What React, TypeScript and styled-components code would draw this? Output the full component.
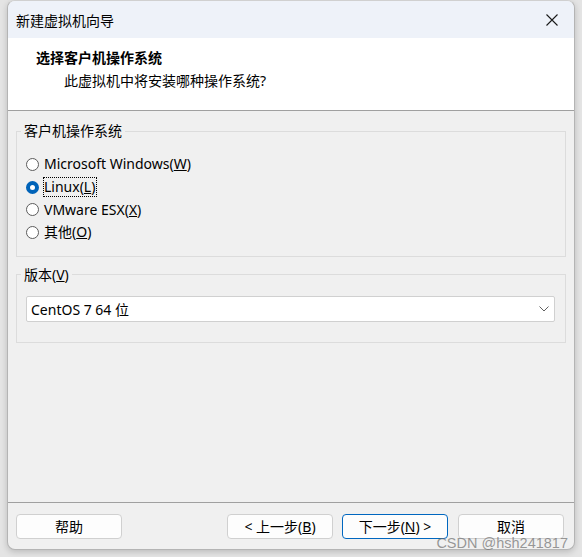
import React from "react";
import styled, { createGlobalStyle } from "styled-components";

const GlobalStyle = createGlobalStyle`
  html, body {
    margin: 0;
    padding: 0;
    background: #e4e4e4;
  }
  body {
    font-family: "Noto Sans", "Noto Sans CJK SC", sans-serif;
    font-size: 14px;
    color: #000;
  }
`;

const Page = styled.div`
  width: 582px;
  height: 557px;
  position: relative;
  overflow: hidden;
`;

const Window = styled.div`
  margin-left: 7px;
  width: 568px;
  height: 550px;
  background: #f0f0f0;
  border: 1px solid #b4b4b4;
  border-top-color: #d0d0d0;
  border-radius: 8px;
  box-sizing: border-box;
  box-shadow: 0 2px 6px rgba(0, 0, 0, 0.18);
  overflow: hidden;
  display: flex;
  flex-direction: column;
`;

const TitleBar = styled.div`
  height: 37px;
  flex-shrink: 0;
  background: #eef2f9;
  display: flex;
  align-items: center;
  justify-content: space-between;
  padding: 0 16px 0 8px;
  font-size: 14px;
`;

const CloseIcon = styled.svg`
  width: 12px;
  height: 12px;
`;

const Header = styled.div`
  height: 73px;
  flex-shrink: 0;
  background: #fff;
  border-bottom: 1px solid #a0a0a0;
  padding: 10px 0 0 28px;
  box-sizing: border-box;
`;

const HeaderTitle = styled.div`
  font-weight: 700;
  font-size: 14px;
  line-height: 20px;
`;

const HeaderSub = styled.div`
  font-size: 14px;
  line-height: 20px;
  margin-top: 3px;
  padding-left: 28px;
`;

const Body = styled.div`
  flex: 1;
  padding: 11px 8px 0;
  display: flex;
  flex-direction: column;
  gap: 9px;
`;

const Group = styled.fieldset<{ $bottom: number }>`
  margin: 0;
  border: 1px solid #dcdcdc;
  padding: 0 10px ${(p) => p.$bottom}px 9px;
  min-width: 0;
`;

const Legend = styled.legend`
  padding: 0 3px;
  margin-left: -5px;
  font-size: 14px;
  line-height: 18px;
`;

const RadioList = styled.div`
  display: flex;
  flex-direction: column;
  padding-top: 13px;
`;

const RadioRow = styled.label`
  display: flex;
  align-items: center;
  height: 22.7px;
  gap: 5px;
`;

const Circle = styled.span<{ $checked?: boolean }>`
  width: 13px;
  height: 13px;
  border-radius: 50%;
  box-sizing: border-box;
  border: ${(p) => (p.$checked ? "4px solid #0063b8" : "1px solid #5c5c5c")};
  background: #fff;
  flex-shrink: 0;
`;

const RadioText = styled.span<{ $focus?: boolean }>`
  line-height: 18px;
  outline: ${(p) => (p.$focus ? "1px dotted #000" : "none")};
  outline-offset: 0;
  padding-right: ${(p) => (p.$focus ? "1px" : "0")};
`;

const Select = styled.div`
  margin-top: 12px;
  height: 26px;
  background: #fff;
  border: 1px solid #d0d0d0;
  border-radius: 2px;
  box-sizing: border-box;
  display: flex;
  align-items: center;
  justify-content: space-between;
  padding: 0 5px 0 4px;
`;

const Chevron = styled.svg`
  width: 10px;
  height: 6px;
`;

const Footer = styled.div`
  height: 47px;
  flex-shrink: 0;
  border-top: 1px solid #a0a0a0;
  display: flex;
  align-items: center;
  padding: 0 10px 0 8px;
  box-sizing: border-box;
`;

const Button = styled.button<{ $primary?: boolean; $gap?: number }>`
  width: 106px;
  height: 25px;
  margin-left: ${(p) => p.$gap ?? 0}px;
  background: #fdfdfd;
  border: 1px solid ${(p) => (p.$primary ? "#0067c0" : "#d0d0d0")};
  border-radius: 4px;
  font-family: inherit;
  font-size: 14px;
  color: #000;
  padding: 0;
  display: flex;
  align-items: center;
  justify-content: center;
`;

const Watermark = styled.div`
  position: absolute;
  right: 14px;
  bottom: 6px;
  font-family: "Liberation Sans", "Noto Sans", sans-serif;
  font-size: 14.5px;
  color: rgba(110, 110, 110, 0.7);
`;

const oses = [
  { id: "win", text: "Microsoft Windows(", key: "W" },
  { id: "linux", text: "Linux(", key: "L", checked: true },
  { id: "esx", text: "VMware ESX(", key: "X" },
  { id: "other", text: "其他(", key: "O" },
];

export default function App() {
  return (
    <Page>
      <GlobalStyle />
      <Window>
        <TitleBar>
          <span>新建虚拟机向导</span>
          <CloseIcon viewBox="0 0 12 12">
            <path d="M0.5 0.5 L11.5 11.5 M11.5 0.5 L0.5 11.5" stroke="#1a1a1a" strokeWidth="1.1" />
          </CloseIcon>
        </TitleBar>
        <Header>
          <HeaderTitle>选择客户机操作系统</HeaderTitle>
          <HeaderSub>此虚拟机中将安装哪种操作系统?</HeaderSub>
        </Header>
        <Body>
          <Group $bottom={12}>
            <Legend>客户机操作系统</Legend>
            <RadioList>
              {oses.map((o) => (
                <RadioRow key={o.id}>
                  <Circle $checked={o.checked} />
                  <RadioText $focus={o.checked}>
                    {o.text}
                    <u>{o.key}</u>)
                  </RadioText>
                </RadioRow>
              ))}
            </RadioList>
          </Group>
          <Group $bottom={20}>
            <Legend>
              版本(<u>V</u>)
            </Legend>
            <Select>
              <span>CentOS 7 64 位</span>
              <Chevron viewBox="0 0 10 6">
                <path d="M0.5 0.5 L5 5 L9.5 0.5" fill="none" stroke="#606060" strokeWidth="1" />
              </Chevron>
            </Select>
          </Group>
        </Body>
        <Footer>
          <Button>帮助</Button>
          <Button $gap={105}>
            &lt; 上一步(<u>B</u>)
          </Button>
          <Button $gap={9} $primary>
            下一步(<u>N</u>) &gt;
          </Button>
          <Button $gap={10}>取消</Button>
        </Footer>
      </Window>
      <Watermark>CSDN @hsh241817</Watermark>
    </Page>
  );
}
